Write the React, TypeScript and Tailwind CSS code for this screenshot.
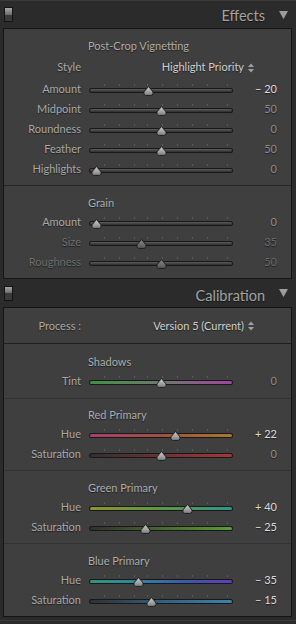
import { useId } from "react";

type Row = {
  label: string;
  value: string;
  pct: number;
  track?: string;
  bright?: boolean;
  disabled?: boolean;
};

const GRAY = "bg-[linear-gradient(to_bottom,#5c5c5c,#2e2e2e)]";

const vignette: Row[] = [
  { label: "Amount", value: "− 20", pct: 0.4, bright: true },
  { label: "Midpoint", value: "50", pct: 0.5 },
  { label: "Roundness", value: "0", pct: 0.5 },
  { label: "Feather", value: "50", pct: 0.5 },
  { label: "Highlights", value: "0", pct: 0 },
];

const grain: Row[] = [
  { label: "Amount", value: "0", pct: 0 },
  { label: "Size", value: "35", pct: 0.35, disabled: true },
  { label: "Roughness", value: "50", pct: 0.5, disabled: true },
];

const calibration: { title: string; rows: Row[]; pad: string }[] = [
  {
    title: "Shadows",
    pad: "pt-[7px] pb-[7px]",
    rows: [
      {
        label: "Tint",
        value: "0",
        pct: 0.5,
        track: "bg-[linear-gradient(to_right,#3f9043,#6f786f,#9c469c)]",
      },
    ],
  },
  {
    title: "Red Primary",
    pad: "pt-[5px] pb-[6px]",
    rows: [
      {
        label: "Hue",
        value: "+ 22",
        pct: 0.61,
        bright: true,
        track: "bg-[linear-gradient(to_right,#a63f72,#a0503e,#a8782f)]",
      },
      {
        label: "Saturation",
        value: "0",
        pct: 0.5,
        track: "bg-[linear-gradient(to_right,#303030,#6e3232,#a43838)]",
      },
    ],
  },
  {
    title: "Green Primary",
    pad: "pt-[6px] pb-[6px]",
    rows: [
      {
        label: "Hue",
        value: "+ 40",
        pct: 0.7,
        bright: true,
        track: "bg-[linear-gradient(to_right,#8f942e,#5a9842,#2f978b)]",
      },
      {
        label: "Saturation",
        value: "− 25",
        pct: 0.375,
        bright: true,
        track: "bg-[linear-gradient(to_right,#303030,#46692f,#5a9c38)]",
      },
    ],
  },
  {
    title: "Blue Primary",
    pad: "pt-[6px] pb-[6px]",
    rows: [
      {
        label: "Hue",
        value: "− 35",
        pct: 0.325,
        bright: true,
        track: "bg-[linear-gradient(to_right,#2f9674,#2f86a0,#3a58ae,#633cb8)]",
      },
      {
        label: "Saturation",
        value: "− 15",
        pct: 0.425,
        bright: true,
        track: "bg-[linear-gradient(to_right,#303030,#335f80,#3b82ad)]",
      },
    ],
  },
];

const TICKS = [15, 30, 45, 58, 73, 88, 103, 118, 138];

function Thumb({ disabled }: { disabled?: boolean }) {
  const id = useId();
  return (
    <svg width="11" height="10" viewBox="0 0 11 10">
      <defs>
        <linearGradient id={id} x1="0" y1="0" x2="0" y2="1">
          <stop offset="0" stopColor={disabled ? "#8a8a8a" : "#d4d4d4"} />
          <stop offset="1" stopColor={disabled ? "#555555" : "#7c7c7c"} />
        </linearGradient>
      </defs>
      <path
        d="M5.5 0.5 L9.3 5 C10.6 6.4 10.3 9.4 7.8 9.4 L3.2 9.4 C0.7 9.4 0.4 6.4 1.7 5 Z"
        fill={`url(#${id})`}
        stroke="#1c1c1c"
        strokeWidth="1"
      />
    </svg>
  );
}

function Slider({ row }: { row: Row }) {
  const labelTone = row.disabled ? "text-[#6e6e6e]" : "text-[#a9a9a9]";
  const valueTone = row.disabled
    ? "text-[#6a6a6a]"
    : row.bright
      ? "text-[#dcdcdc]"
      : "text-[#8e8e8e]";
  return (
    <div className="flex h-5 items-center">
      <div className={`w-[77px] pt-px text-right ${labelTone}`}>{row.label}</div>
      <div className="relative ml-2 h-5 w-[144px]">
        {TICKS.map((t) => (
          <div
            key={t}
            className="absolute top-[5px] h-[2px] w-px bg-[#5a5a5a]"
            style={{ left: t }}
          />
        ))}
        <div className="absolute inset-x-0 top-[9px] h-[5px] rounded-full bg-[#181818] p-px">
          <div className={`h-[3px] rounded-full ${row.track ?? GRAY}`} />
        </div>
        <div
          className="absolute top-[7px] flex"
          style={{ left: 1.5 + row.pct * 131 }}
        >
          <Thumb disabled={row.disabled} />
        </div>
      </div>
      <div className={`w-[44px] pt-px text-right ${valueTone}`}>{row.value}</div>
    </div>
  );
}

function SectionTitle({ children }: { children: string }) {
  return (
    <div className="flex h-5 items-center pt-[2px] pl-[84px] text-[#adadad]">
      {children}
    </div>
  );
}

function UpDown() {
  return (
    <svg width="6" height="10" viewBox="0 0 6 10" className="ml-[4px]">
      <path d="M0 4 L3 0.5 L6 4 Z M0 6 L3 9.5 L6 6 Z" fill="#a0a0a0" />
    </svg>
  );
}

function Header({ title, first }: { title: string; first?: boolean }) {
  return (
    <div
      className={`flex h-[28px] items-center pl-[4px] pr-[8px] ${first ? "border-t border-[#3a3a3a]" : ""}`}
    >
      <div className="flex h-[15px] w-[9px] flex-col border border-[#141414]">
        <div className="h-1/2 bg-[linear-gradient(to_bottom,#a8a8a8,#6a6a6a)]" />
        <div className="h-1/2 bg-[#3a3a3a]" />
      </div>
      <div className="flex-1" />
      <div
        className={`text-[14.5px] text-[#a3a3a3] ${first ? "pt-[2px]" : "pt-[5px]"}`}
      >
        {title}
      </div>
      <svg width="9" height="8" viewBox="0 0 9 8" className="ml-[14px]">
        <path d="M0 0 L9 0 L4.5 8 Z" fill="#9c9c9c" />
      </svg>
    </div>
  );
}

export default function App() {
  return (
    <div className="h-[624px] w-[296px] overflow-hidden bg-[#2b2b2b] [font-family:Lato,sans-serif] text-[11px] [text-shadow:0_1px_1px_rgba(0,0,0,0.55)]">
      <Header title="Effects" first />

      <div className="ml-[3px] mr-[4px] border border-[#151515] bg-[#3f3f3f]">
        <div className="pt-[6px] pb-[6px]">
          <SectionTitle>Post-Crop Vignetting</SectionTitle>
          <div className="my-[2px] flex h-5 items-center pt-px">
            <div className="w-[77px] text-right text-[#a9a9a9]">Style</div>
            <div className="flex flex-1 items-center justify-end pr-[37px] text-[#d0d0d0]">
              Highlight Priority
              <UpDown />
            </div>
          </div>
          {vignette.map((r) => (
            <Slider key={r.label} row={r} />
          ))}
        </div>
        <div className="border-t border-[#262626] pt-[6px] pb-[6px]">
          <SectionTitle>Grain</SectionTitle>
          {grain.map((r) => (
            <Slider key={r.label} row={r} />
          ))}
        </div>
      </div>

      <Header title="Calibration" />

      <div className="ml-[3px] mr-[4px] border border-[#151515] bg-[#3f3f3f]">
        <div className="flex h-[35px] items-center pt-px">
          <div className="w-[77px] text-right text-[#a9a9a9]">Process :</div>
          <div className="flex flex-1 items-center justify-end pr-[37px] text-[#d0d0d0]">
            Version 5 (Current)
            <UpDown />
          </div>
        </div>
        {calibration.map((s, i) => (
          <div
            key={s.title}
            className={`${s.pad} border-t ${i === 0 ? "border-[#202020]" : "border-[#333333]"}`}
          >
            <SectionTitle>{s.title}</SectionTitle>
            {s.rows.map((r) => (
              <Slider key={r.label} row={r} />
            ))}
          </div>
        ))}
      </div>
      <div className="mt-[3px] border-t border-[#3a3a3a]" />
    </div>
  );
}
